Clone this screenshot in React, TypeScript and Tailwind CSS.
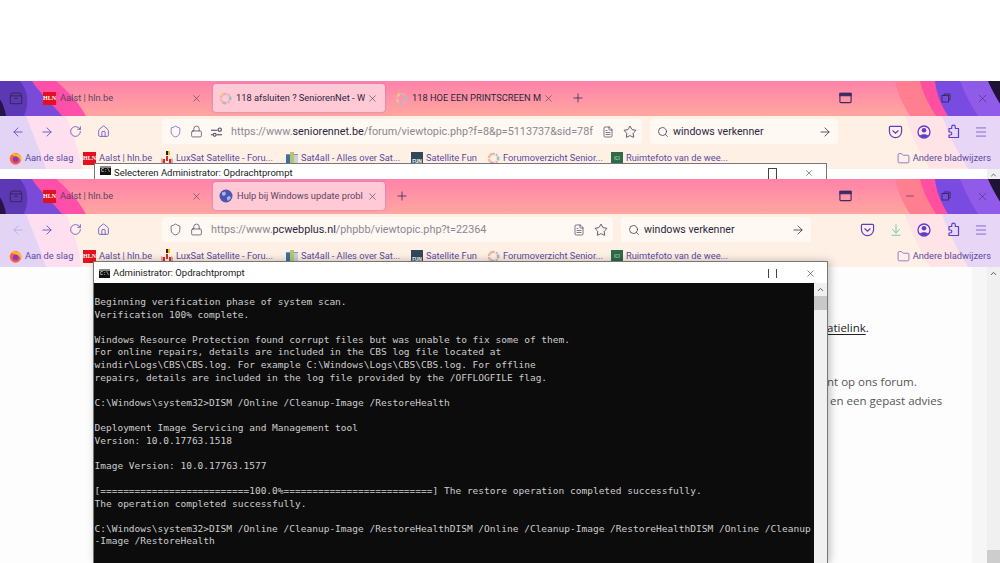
import React from 'react';
import { ArrowLeft, ArrowRight, RotateCw, House, Lock, Search, Star, Menu, X, Plus, Minus, Folder, ArrowDownToLine, FileText, ChevronUp, Shield } from 'lucide-react';

const HlnIcon: React.FC = () => (
  <span className="flex h-[13px] w-[13px] shrink-0 items-center justify-center bg-[#e3101f] font-['Liberation_Serif',serif] text-[6px] font-bold leading-none text-white">HLN</span>
);

const RingIcon: React.FC = () => (
  <svg width="13" height="13" viewBox="0 0 14 14" className="shrink-0" fill="none" strokeWidth="2.6">
    <circle cx="7" cy="7" r="5" stroke="#f4a6c0" strokeDasharray="2 1.2" />
    <circle cx="7" cy="7" r="5" stroke="#8fd3a8" strokeDasharray="2 6.2 2 10" />
    <circle cx="7" cy="7" r="5" stroke="#f2c879" strokeDasharray="2 4 3 12" strokeDashoffset="9" />
    <circle cx="7" cy="7" r="5" stroke="#a8b4ea" strokeDasharray="2 20" strokeDashoffset="15" />
  </svg>
);

const GlobeIcon: React.FC = () => (
  <svg width="14" height="14" viewBox="0 0 14 14" className="shrink-0">
    <circle cx="7" cy="7" r="6.5" fill="#4a56b0" />
    <path d="M3 3.500 6 2.500 7 5 5 7 3 6ZM8 8l3-1 1 2-3 3-1-2Z" fill="#a9b7ea" />
  </svg>
);

const FirefoxIcon: React.FC = () => (
  <svg width="13" height="13" viewBox="0 0 14 14" className="shrink-0">
    <circle cx="7" cy="7.400" r="6.200" fill="#f5663c" />
    <path d="M2 3c1.500 0 2-2 4.500-2.600C5.700 2.200 9 2.800 10.500 1.800 13 4 13.800 7 13 9.500 11.500 6 8 4.500 2 3Z" fill="#ffb52e" />
    <circle cx="7.200" cy="8" r="3.200" fill="#8a3bc4" />
    <path d="M4 8.500a3.400 3.400 0 0 0 6.400 1A4.500 4.500 0 0 1 4 8.500Z" fill="#e4337c" />
  </svg>
);

const LuxSatIcon: React.FC = () => (
  <svg width="12" height="14" viewBox="0 0 12 14" className="shrink-0">
    <rect x="5" y="0" width="2" height="4" fill="#222" />
    <rect x="7" y="0" width="2" height="4" fill="#f2c200" />
    <path d="M5 5h2v5H5zM2 8h2v5H2zM8 8h2v5H8z" fill="#d92a2a" />
    <path d="M0 7l2 1v5H0zM10 7l2 1v5h-2z" fill="#e8a0a0" />
  </svg>
);

const Sat4allIcon: React.FC = () => (
  <svg width="12" height="13" viewBox="0 0 12 13" className="shrink-0">
    <rect x="0" y="2" width="12" height="11" fill="#7a98b8" />
    <rect x="0" y="3" width="5" height="9" fill="#3b6ea5" />
    <rect x="7" y="3" width="5" height="9" fill="#c9d2d8" />
    <rect x="4" y="0" width="4" height="13" fill="#b9c46a" />
  </svg>
);

const SatFunIcon: React.FC = () => (
  <span className="flex h-[13px] w-[12px] shrink-0 items-end justify-center bg-[#33475a] pb-px text-[5px] font-bold leading-none text-white">FUN</span>
);

const GreenIcon: React.FC = () => (
  <span className="flex h-[13px] w-[12px] shrink-0 items-center justify-center bg-[#2f6a4a] text-[5px] leading-none text-[#bfe0cc]">ICI</span>
);

const ViewIcon: React.FC = () => (
  <svg width="14" height="14" viewBox="0 0 16 16" fill="none" stroke="#3d2a66" strokeWidth="1.400">
    <path d="M3 2.500h10l1.500 3v8a1 1 0 0 1-1 1h-11a1 1 0 0 1-1-1v-8Z" strokeLinejoin="round" />
    <path d="M1.500 5.500h13M6 8.500h4" />
  </svg>
);

const TabsIcon: React.FC = () => (
  <svg width="13" height="12" viewBox="0 0 14 12" fill="none" stroke="#3d2a66" strokeWidth="1.200">
    <rect x="1" y="1" width="12" height="10" rx="1" />
    <rect x="1" y="1" width="12" height="2.500" fill="#3d2a66" />
  </svg>
);

const RestoreIcon: React.FC = () => (
  <svg width="10" height="10" viewBox="0 0 10 10" fill="none" stroke="#3d2a66" strokeWidth="1">
    <rect x="1" y="2.500" width="6.500" height="6.500" />
    <path d="M3 2.500V1h6v6H7.500" />
  </svg>
);

const PermIcon: React.FC = () => (
  <svg width="13" height="12" viewBox="0 0 14 12" fill="none" stroke="#45405a" strokeWidth="1.100">
    <path d="M1 4h7M1 9h2" />
    <circle cx="10.500" cy="3.500" r="1.800" />
    <circle cx="5" cy="9" r="1.600" />
    <path d="M7 9h6" />
  </svg>
);

const PocketIcon: React.FC = () => (
  <svg width="15" height="14" viewBox="0 0 16 15" fill="none" stroke="#5b3fc8" strokeWidth="1.300">
    <path d="M2.500 1.500h11a1 1 0 0 1 1 1V7a6.500 6.500 0 0 1-13 0V2.500a1 1 0 0 1 1-1Z" />
    <path d="M5.200 6.200 8 8.800l2.800-2.600" strokeLinecap="round" />
  </svg>
);

const AccountIcon: React.FC = () => (
  <svg width="14" height="14" viewBox="0 0 14 14">
    <circle cx="7" cy="7" r="6" fill="none" stroke="#5b3fc8" strokeWidth="1.300" />
    <circle cx="7" cy="5.300" r="2.300" fill="#5b3fc8" />
    <path d="M2.900 10.800C4 8.800 10 8.800 11.100 10.800A5.500 5.500 0 0 1 2.900 10.800Z" fill="#5b3fc8" />
  </svg>
);

const PuzzleIcon: React.FC = () => (
  <svg width="14" height="15" viewBox="0 0 14 15" fill="none" stroke="#5b3fc8" strokeWidth="1.200" strokeLinejoin="round">
    <path d="M7.500 1.200a1.800 1.800 0 0 1 1.800 1.800v1.500h3.200v9H3v-2.500h1.300a1.500 1.500 0 0 0 0-3H3V4.500h2.700V3a1.800 1.800 0 0 1 1.800-1.800Z" />
  </svg>
);

const TabItem: React.FC<{ icon: React.ReactNode; title: string; active?: boolean; dark?: boolean }> = ({ icon, title, active, dark }) => (
  <div className={`flex h-[28px] w-[172px] shrink-0 items-center pl-[6px] pr-[7px] ${active ? 'rounded-[3px] bg-[#ffc9d6] shadow-[0_0_2px_#b06ac8]' : ''}`}>
    {icon}
    <span className={`ml-[4px] min-w-0 flex-1 overflow-hidden whitespace-nowrap font-['Roboto',sans-serif] text-[9.300px] ${dark ? 'text-[#2c2640]' : 'text-[#5c4560]'}`}>{title}</span>
    <X size={11} strokeWidth={1.300} color="#4a3a5c" className="ml-[2px] shrink-0" />
  </div>
);

const TabStrip: React.FC<{ children: React.ReactNode; minimizeFaded?: boolean }> = ({ children, minimizeFaded }) => (
  <div className="relative flex h-[35px] items-center bg-gradient-to-b from-[#ff82a9] to-[#ffa69f] pb-[1px]">
    <svg className="absolute inset-0" width="1000" height="35" viewBox="0 0 1000 34" preserveAspectRatio="none">
      <path d="M0 0H56C66 8 78 20 86 34H0Z" fill="#ff4fa8" />
      <path d="M0 0H32C38 10 52 22 62 34H0Z" fill="#7a4bd8" />
      <path d="M0 0H20C30 12 28 24 24 34H0Z" fill="#5c38b4" />
      <path d="M0 18C3 22 5 28 6 34H0Z" fill="#241544" />
      <path d="M895 0H1000V34H910C902 22 897 10 895 0Z" fill="#ff7f90" />
      <path d="M920 0H1000V34H936C928 22 922 10 920 0Z" fill="#ff4fa0" />
      <path d="M935 0H1000V34H948C940 22 936 10 935 0Z" fill="#7a4be0" />
      <path d="M960 0H1000V34H978C970 22 964 10 960 0Z" fill="#8f5be8" />
      <path d="M988 0H1000V22C995 14 991 7 988 0Z" fill="#1f1436" />
    </svg>
    <div className="relative flex w-[32px] shrink-0 justify-center"><ViewIcon /></div>
    <div className="relative flex min-w-0 flex-1 items-center gap-[4px] pl-[5px]">{children}</div>
    <div className="relative flex w-[170px] shrink-0 items-center">
      <div className="flex w-[30px] justify-center"><TabsIcon /></div>
      <div className={`ml-[32px] flex w-[36px] justify-center ${minimizeFaded ? 'opacity-10' : ''}`}><Minus size={12} strokeWidth={1.200} color="#3d2a66" /></div>
      <div className="flex w-[36px] justify-center"><RestoreIcon /></div>
      <div className="flex w-[36px] justify-center"><X size={13} strokeWidth={1} color="#3d2a66" /></div>
    </div>
  </div>
);

const NavBar: React.FC<{ backFaded?: boolean; urlWidth: string; searchWidth: string; perm?: boolean; children: React.ReactNode; search: string; right: React.ReactNode; faintShield?: boolean }> = ({ backFaded, urlWidth, searchWidth, perm, children, search, right, faintShield }) => (
  <div className="flex h-[31px] items-center">
    <div className="flex w-[162px] shrink-0 items-center pl-[11px]">
      <div className="w-[29px]"><ArrowLeft size={14} strokeWidth={1.400} color={backFaded ? '#b9a8e8' : '#5b3fc8'} /></div>
      <div className="w-[28.500px]"><ArrowRight size={14} strokeWidth={1.400} color="#5b3fc8" /></div>
      <div className="w-[28.500px]"><RotateCw size={13} strokeWidth={1.400} color="#5b3fc8" /></div>
      <House size={13} strokeWidth={1.400} color="#5b3fc8" />
    </div>
    <div className={`flex h-[25px] shrink-0 items-center rounded-[4px] bg-[#fff8f3] pl-[7px] pr-[5px] ${urlWidth}`}>
      <Shield size={13} strokeWidth={1.300} color={faintShield ? '#45405a' : '#4f5bd0'} className="shrink-0" />
      <Lock size={13} strokeWidth={1.300} color="#45405a" className="ml-[8px] shrink-0" />
      {perm && <span className="ml-[7px] shrink-0"><PermIcon /></span>}
      <span className="ml-[8px] min-w-0 flex-1 overflow-hidden whitespace-nowrap pt-px font-['Roboto',sans-serif] text-[10.800px] text-[#8b8791]">{children}</span>
      <FileText size={12} strokeWidth={1.400} color="#45405a" className="ml-[6px] shrink-0" />
      <Star size={14} strokeWidth={1.300} color="#2c2640" className="ml-[9px] shrink-0" />
    </div>
    <div className={`ml-[8px] flex h-[25px] shrink-0 items-center rounded-[4px] bg-[#fff8f3] pl-[7px] pr-[6px] ${searchWidth}`}>
      <Search size={12} strokeWidth={1.400} color="#2c2640" className="shrink-0" />
      <span className="ml-[4px] flex-1 whitespace-nowrap pt-px font-['Roboto',sans-serif] text-[10.600px] text-[#2c2640]">{search}</span>
      <ArrowRight size={14} strokeWidth={1.300} color="#2c2640" />
    </div>
    <div className="ml-auto flex items-center pr-[4.750px]">{right}</div>
  </div>
);

const Bookmark: React.FC<{ icon: React.ReactNode; label: string; width: string }> = ({ icon, label, width }) => (
  <div className={`flex shrink-0 items-center gap-[3px] ${width}`}>
    {icon}
    <span className="whitespace-nowrap">{label}</span>
  </div>
);

const Bookmarks: React.FC = () => (
  <div className="flex h-[22px] items-center pl-[9px] pr-[9px] font-['Roboto',sans-serif] text-[9.300px] text-[#5a4aa0]">
    <Bookmark icon={<FirefoxIcon />} label="Aan de slag" width="w-[74px]" />
    <Bookmark icon={<HlnIcon />} label="Aalst | hln.be" width="w-[78px]" />
    <Bookmark icon={<LuxSatIcon />} label="LuxSat Satellite - Foru..." width="w-[125px]" />
    <Bookmark icon={<Sat4allIcon />} label="Sat4all - Alles over Sat..." width="w-[125px]" />
    <Bookmark icon={<SatFunIcon />} label="Satellite Fun" width="w-[76px]" />
    <Bookmark icon={<RingIcon />} label="Forumoverzicht Senior..." width="w-[124px]" />
    <Bookmark icon={<GreenIcon />} label="Ruimtefoto van de wee..." width="w-[120px]" />
    <div className="ml-auto flex items-center gap-[3px]">
      <Folder size={13} strokeWidth={1.200} color="#5b3fc8" />
      <span>Andere bladwijzers</span>
    </div>
  </div>
);

const Toolbars: React.FC<{ children: React.ReactNode }> = ({ children }) => (
  <div className="relative bg-[#fff0e6]">
    <svg className="absolute inset-0" width="1000" height="53" viewBox="0 0 1000 53">
      <path d="M0 0H66C72 14 78 30 82 53H0Z" fill="#fddff0" />
      <path d="M0 0H26C32 16 40 34 46 53H0Z" fill="#e3d3f4" />
      <path d="M905 0H1000V53H930C918 34 910 16 905 0Z" fill="#ffe3e6" />
      <path d="M942 0H1000V53H968C956 34 948 16 942 0Z" fill="#e8d6f6" />
    </svg>
    <div className="relative">{children}</div>
  </div>
);

const SmallIcon: React.FC<{ children: React.ReactNode }> = ({ children }) => (
  <div className="flex w-[28.500px] justify-center">{children}</div>
);

const PageScrollbar: React.FC<{ thumb?: boolean }> = ({ thumb }) => (
  <div className="flex w-[13px] shrink-0 flex-col items-center bg-[#f0f0f0]">
    <ChevronUp size={9} strokeWidth={2.500} color="#505050" className="mt-[2px]" />
    {thumb && <div className="mt-auto h-[13px] w-full bg-[#cdcdcd]" />}
  </div>
);

const CmdGlyph: React.FC = () => (
  <span className="flex h-[9px] w-[11px] shrink-0 items-center border-t-2 border-[#888] bg-[#111] pl-px font-['Liberation_Mono',monospace] text-[5px] leading-none text-white">C:\</span>
);

const CMD_TEXT = `Beginning verification phase of system scan.
Verification 100% complete.

Windows Resource Protection found corrupt files but was unable to fix some of them.
For online repairs, details are included in the CBS log file located at
windir\\Logs\\CBS\\CBS.log. For example C:\\Windows\\Logs\\CBS\\CBS.log. For offline
repairs, details are included in the log file provided by the /OFFLOGFILE flag.

C:\\Windows\\system32>DISM /Online /Cleanup-Image /RestoreHealth

Deployment Image Servicing and Management tool
Version: 10.0.17763.1518

Image Version: 10.0.17763.1577

[==========================100.0%==========================] The restore operation completed successfully.
The operation completed successfully.

C:\\Windows\\system32>DISM /Online /Cleanup-Image /RestoreHealthDISM /Online /Cleanup-Image /RestoreHealthDISM /Online /Cleanup
-Image /RestoreHealth`;

export default function App() {
  return (
    <div className="relative flex h-[563px] w-[1000px] flex-col overflow-hidden bg-white font-['Open_Sans',sans-serif]">
      <div className="h-[81px] shrink-0 bg-white" />

      {/* back window */}
      <div className="relative h-[98px] shrink-0 overflow-hidden">
        <TabStrip minimizeFaded>
          <TabItem icon={<HlnIcon />} title="Aalst | hln.be" />
          <TabItem icon={<RingIcon />} title="118 afsluiten ? SeniorenNet - W" active dark />
          <TabItem icon={<RingIcon />} title="118 HOE EEN PRINTSCREEN M/" dark />
          <Plus size={14} strokeWidth={1.400} color="#3d2a66" className="ml-[6px] shrink-0" />
        </TabStrip>
        <Toolbars>
          <NavBar
            perm
            urlWidth="w-[480px]"
            searchWidth="w-[188px]"
            search="windows verkenner"
            right={<>
              <SmallIcon><PocketIcon /></SmallIcon>
              <SmallIcon><AccountIcon /></SmallIcon>
              <SmallIcon><PuzzleIcon /></SmallIcon>
              <SmallIcon><Menu size={14} strokeWidth={1.200} color="#5b3fc8" /></SmallIcon>
            </>}
          >
            https://www.<span className="text-[#2c2640]">seniorennet.be</span>/forum/viewtopic.php?f=8&amp;p=5113737&amp;sid=78f
          </NavBar>
          <Bookmarks />
        </Toolbars>
        <div className="flex h-[10px] justify-end bg-white"><PageScrollbar /></div>
        <div className="absolute left-[94px] top-[82px] flex h-[18px] w-[733px] items-start overflow-hidden border border-[#777] bg-white pl-[5px] pt-[2px] font-['Roboto',sans-serif] text-[9.500px] text-[#222]">
          <CmdGlyph />
          <span className="ml-[3px]">Selecteren Administrator: Opdrachtprompt</span>
          <span className="ml-auto mr-[27px] mt-[2px] h-[12px] w-[9px] border border-[#444]" />
          <X size={10} strokeWidth={1.200} color="#222" className="mr-[12px] mt-[2px]" />
        </div>
      </div>

      {/* front window */}
      <TabStrip>
        <TabItem icon={<HlnIcon />} title="Aalst | hln.be" />
        <TabItem icon={<GlobeIcon />} title="Hulp bij Windows update probl" active />
        <Plus size={14} strokeWidth={1.400} color="#3d2a66" className="ml-[6px] shrink-0" />
      </TabStrip>
      <Toolbars>
        <NavBar
          backFaded
          faintShield
          urlWidth="w-[451px]"
          searchWidth="w-[190px]"
          search="windows verkenner"
          right={<>
            <SmallIcon><PocketIcon /></SmallIcon>
            <SmallIcon><ArrowDownToLine size={14} strokeWidth={1.300} color="#3fbfa8" /></SmallIcon>
            <SmallIcon><AccountIcon /></SmallIcon>
            <SmallIcon><PuzzleIcon /></SmallIcon>
            <SmallIcon><Menu size={14} strokeWidth={1.200} color="#5b3fc8" /></SmallIcon>
          </>}
        >
          https://www.<span className="text-[#2c2640]">pcwebplus.nl</span>/phpbb/viewtopic.php?t=22364
        </NavBar>
        <Bookmarks />
      </Toolbars>

      {/* page under the console */}
      <div className="flex min-h-0 flex-1 bg-[#fdfdfd]">
        <div className="min-w-0 flex-1 pl-[827px] pt-[51px] text-[11.500px] leading-[19px] text-[#555]">
          <p className="whitespace-nowrap text-[#222]"><span className="underline underline-offset-2">atielink</span>.</p>
          <p className="mt-[35px] whitespace-nowrap">nt op ons forum.</p>
          <p className="whitespace-nowrap pl-[3px]">en een gepast advies</p>
        </div>
        <div className="w-[15px] shrink-0 bg-[#f6f6f6]" />
        <PageScrollbar thumb />
      </div>

      {/* console window */}
      <div className="absolute left-[93px] top-[261px] flex h-[302px] w-[735px] flex-col border border-b-0 border-[#777] bg-white shadow-[2px_0_8px_rgba(0,0,0,0.25)]">
        <div className="flex h-[21px] shrink-0 items-center pl-[5px] pt-[1px] font-['Roboto',sans-serif] text-[9.500px] text-[#222]">
          <CmdGlyph />
          <span className="ml-[3px]">Administrator: Opdrachtprompt</span>
          <span className="ml-auto mr-[28px] h-[9px] w-[9px] border-x border-[#444]" />
          <X size={11} strokeWidth={1.200} color="#222" className="mr-[11px]" />
        </div>
        <div className="flex min-h-0 flex-1">
          <pre className="min-w-0 flex-1 overflow-hidden bg-[#0c0c0c] pl-[0.500px] pt-[13px] font-['DejaVu_Sans_Mono',monospace] text-[9.520px] leading-[12.600px] text-[#cccccc]">{CMD_TEXT}</pre>
          <div className="flex w-[13px] shrink-0 flex-col items-center bg-[#f0f0f0]">
            <ChevronUp size={9} strokeWidth={2.500} color="#505050" className="mt-[2px]" />
            <div className="mt-[2px] h-[14px] w-full bg-[#c8c8c8]" />
          </div>
        </div>
      </div>
    </div>
  );
}
